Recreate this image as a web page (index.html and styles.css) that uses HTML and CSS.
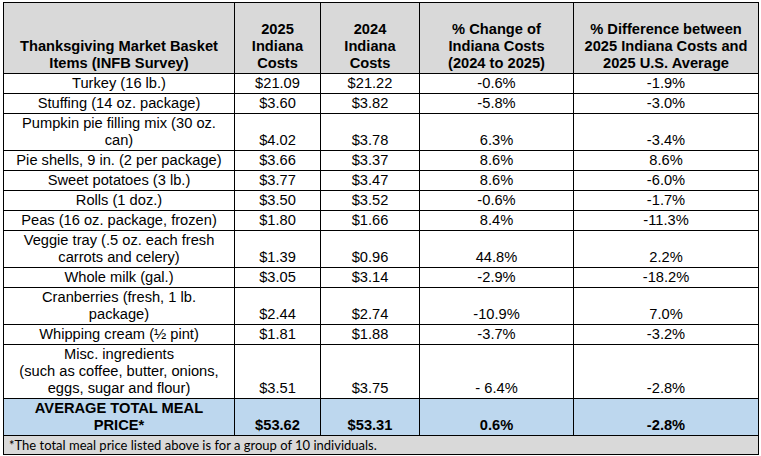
FILE: index.html
```html
<!DOCTYPE html>
<html lang="en">
<head>
<meta charset="utf-8">
<title>Thanksgiving Market Basket</title>
<link rel="stylesheet" href="styles.css">
</head>
<body>
<table class="basket">
  <colgroup>
    <col class="c-item">
    <col class="c-2025">
    <col class="c-2024">
    <col class="c-change">
    <col class="c-diff">
  </colgroup>
  <thead>
    <tr class="head">
      <th>Thanksgiving Market Basket<br>Items (INFB Survey)</th>
      <th>2025<br>Indiana<br>Costs</th>
      <th>2024<br>Indiana<br>Costs</th>
      <th>% Change of<br>Indiana Costs<br>(2024 to 2025)</th>
      <th>% Difference between<br>2025 Indiana Costs and<br>2025 U.S. Average</th>
    </tr>
  </thead>
  <tbody>
    <tr class="r1"><td>Turkey (16 lb.)</td><td>$21.09</td><td>$21.22</td><td>-0.6%</td><td>-1.9%</td></tr>
    <tr class="r1"><td>Stuffing (14 oz. package)</td><td>$3.60</td><td>$3.82</td><td>-5.8%</td><td>-3.0%</td></tr>
    <tr class="r2"><td>Pumpkin pie filling mix (30 oz.<br>can)</td><td>$4.02</td><td>$3.78</td><td>6.3%</td><td>-3.4%</td></tr>
    <tr class="r1"><td>Pie shells, 9 in. (2 per package)</td><td>$3.66</td><td>$3.37</td><td>8.6%</td><td>8.6%</td></tr>
    <tr class="r1"><td>Sweet potatoes (3 lb.)</td><td>$3.77</td><td>$3.47</td><td>8.6%</td><td>-6.0%</td></tr>
    <tr class="r1"><td>Rolls (1 doz.)</td><td>$3.50</td><td>$3.52</td><td>-0.6%</td><td>-1.7%</td></tr>
    <tr class="r1"><td>Peas (16 oz. package, frozen)</td><td>$1.80</td><td>$1.66</td><td>8.4%</td><td>-11.3%</td></tr>
    <tr class="r2"><td>Veggie tray (.5 oz. each fresh<br>carrots and celery)</td><td>$1.39</td><td>$0.96</td><td>44.8%</td><td>2.2%</td></tr>
    <tr class="r1"><td>Whole milk (gal.)</td><td>$3.05</td><td>$3.14</td><td>-2.9%</td><td>-18.2%</td></tr>
    <tr class="r2"><td>Cranberries (fresh, 1 lb.<br>package)</td><td>$2.44</td><td>$2.74</td><td>-10.9%</td><td>7.0%</td></tr>
    <tr class="r1"><td>Whipping cream (½ pint)</td><td>$1.81</td><td>$1.88</td><td>-3.7%</td><td>-3.2%</td></tr>
    <tr class="r3"><td>Misc. ingredients<br>(such as coffee, butter, onions,<br>eggs, sugar and flour)</td><td>$3.51</td><td>$3.75</td><td>- 6.4%</td><td>-2.8%</td></tr>
    <tr class="r2 total"><td>AVERAGE TOTAL MEAL<br>PRICE*</td><td>$53.62</td><td>$53.31</td><td>0.6%</td><td>-2.8%</td></tr>
    <tr class="note"><td colspan="5">*The total meal price listed above is for a group of 10 individuals.</td></tr>
  </tbody>
</table>
</body>
</html>
```
FILE: styles.css
```css
html, body {
  margin: 0;
  padding: 0;
  background: #ffffff;
}

body {
  padding: 2px 0 0 3px;
  font-family: "Liberation Sans", Arial, sans-serif;
  color: #000000;
}

.basket {
  border-collapse: collapse;
  table-layout: fixed;
  width: 755px;
  font-size: 14.67px;
  line-height: 17px;
}

.c-item { width: 231px; }
.c-2025 { width: 86px; }
.c-2024 { width: 99px; }
.c-change { width: 154px; }
.c-diff { width: 185px; }

.basket th,
.basket td {
  border: 1px solid #000000;
  padding: 0 0 1px 0;
  text-align: center;
  vertical-align: bottom;
  white-space: nowrap;
}

.head th {
  background: #d9d9d9;
  font-weight: bold;
  height: 69px;
}

.r1 td { height: 18px; }
.r2 td { height: 35px; }
.r3 td { height: 52px; }

.total td {
  background: #bdd7ee;
  font-weight: bold;
}

.note td {
  background: #d9d9d9;
  text-align: left;
  vertical-align: middle;
  height: 18px;
  padding: 0 0 0 5px;
  font-family: Lato, "Noto Sans", sans-serif;
  font-size: 13px;
  line-height: 15px;
  color: #000000;
}
```
